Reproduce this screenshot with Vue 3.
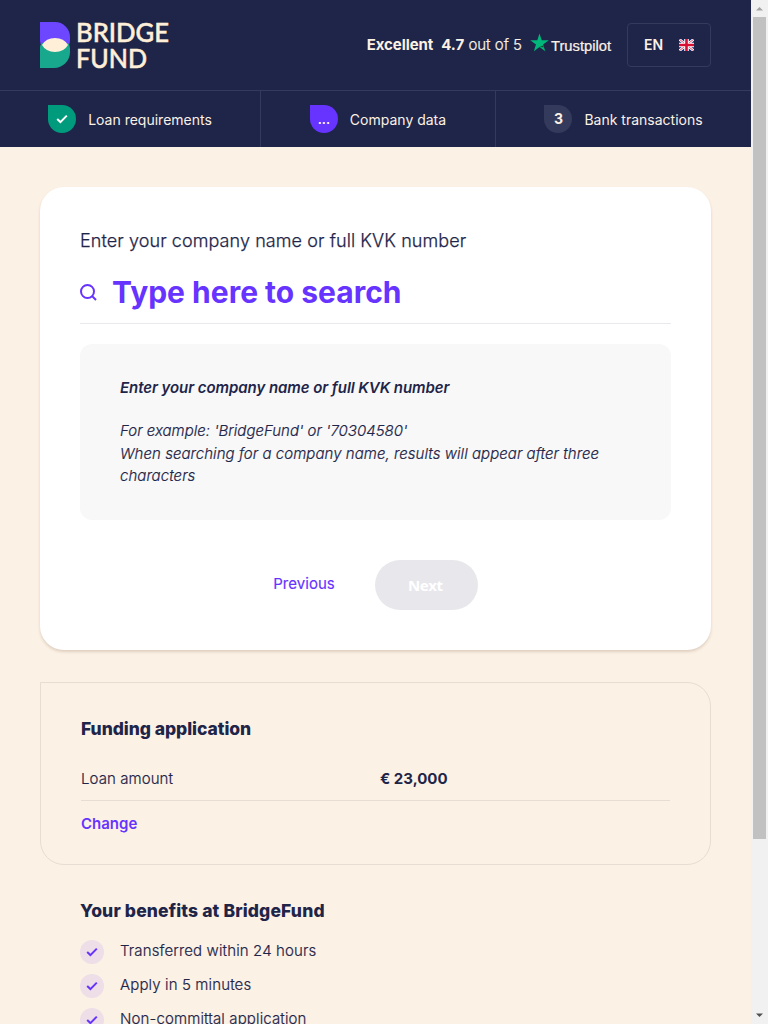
<script setup>
const steps = [
  { label: 'Loan requirements', state: 'done', mark: '' },
  { label: 'Company data', state: 'current', mark: '...' },
  { label: 'Bank transactions', state: 'todo', mark: '3' },
]
const benefits = ['Transferred within 24 hours', 'Apply in 5 minutes', 'Non-committal application']
</script>

<template>
  <div class="window">
    <div class="page">
      <header class="top">
        <svg class="logo" width="130" height="48" viewBox="0 0 130 48">
          <path d="M0 1h15a15 15 0 0 1 15 15v4q0 3-2 5H2q-2-2-2-5z" fill="#6c47ff" />
          <path d="M0 26q0-2 2-4h26q2 2 2 5v4a16 16 0 0 1-16 16H0z" fill="#18a88d" />
          <path d="M2 24Q6 17 15 17t13 7Q24 31 15 31T2 24z" fill="#ffefd8" />
          <text x="36" y="20.500" textLength="93" lengthAdjust="spacingAndGlyphs">BRIDGE</text>
          <text x="36" y="46.500" textLength="71" lengthAdjust="spacingAndGlyphs">FUND</text>
        </svg>
        <div class="rating">
          <b class="excellent">Excellent</b>
          <span class="score"><b>4.7</b> out of 5</span>
          <svg class="trust" width="82" height="24" viewBox="0 0 82 24">
            <path d="M9.500 .5l2.200 6.800h7.100l-5.700 4.200 2.200 6.800-5.800-4.200-5.700 4.200L6 11.500 .2 7.300h7.100z" fill="#00b67a" />
            <path d="M13.200 12.400l.6 1.900-4.300-.2z" fill="#005128" />
            <text x="21" y="17.500" textLength="60" lengthAdjust="spacingAndGlyphs">Trustpilot</text>
          </svg>
        </div>
        <div class="lang">
          <span>EN</span>
          <svg width="15" height="12" viewBox="0 0 15 12">
            <path d="M0 0h15v12H0z" fill="#0a2a78" />
            <path d="M0 0l15 12M15 0L0 12" stroke="#fff" stroke-width="2.6" />
            <path d="M0 0l15 12M15 0L0 12" stroke="#d80f32" stroke-width=".8" />
            <path d="M7.500 0v12M0 6h15" stroke="#fff" stroke-width="4.600" />
            <path d="M7.500 0v12M0 6h15" stroke="#d80f32" stroke-width="2.600" />
          </svg>
        </div>
      </header>
      <nav class="steps">
        <div v-for="s in steps" :key="s.label" class="step" :class="s.state">
          <span class="drop">
            <svg v-if="s.state === 'done'" width="12" height="10" viewBox="0 0 12 10"><path d="M1.200 5.100l3.200 3L10.800 1.600" fill="none" stroke="#fff" stroke-width="2" /></svg>
            <template v-else>{{ s.mark }}</template>
          </span>
          <span class="label">{{ s.label }}</span>
        </div>
      </nav>

      <main>
        <section class="card">
          <p class="lead">Enter your company name or full KVK number</p>
          <div class="search">
            <svg width="18" height="18" viewBox="0 0 18 18"><circle cx="7.500" cy="7.500" r="6.500" /><path d="M12 12l4 4" /></svg>
            <span>Type here to search</span>
          </div>
          <div class="hint">
            <p class="hint-title">Enter your company name or full KVK number</p>
            <p class="hint-text">For example: 'BridgeFund' or '70304580'<br><span class="note">When searching for a company name, results will appear after three characters</span></p>
          </div>
          <div class="actions">
            <a class="previous">Previous</a>
            <button class="next" disabled>Next</button>
          </div>
        </section>

        <section class="funding">
          <h2 class="funding-title">Funding application</h2>
          <div class="row"><span class="amount-label">Loan amount</span><b>€ 23,000</b></div>
          <a class="change">Change</a>
        </section>

        <section class="benefits">
          <h2 class="benefits-title">Your benefits at BridgeFund</h2>
          <ul>
            <li v-for="b in benefits" :key="b">
              <span class="tick"><svg width="12" height="10" viewBox="0 0 12 10"><path d="M1.200 5.100l3.200 3L10.800 1.600" fill="none" stroke="#6633ff" stroke-width="2" /></svg></span>
              <span>{{ b }}</span>
            </li>
          </ul>
        </section>
      </main>
    </div>
    <div class="scrollbar">
      <svg width="17" height="17" viewBox="0 0 17 17"><path d="M5 10.500h7L8.500 7z" fill="#a3a3a3" /></svg>
      <div class="thumb"></div>
      <svg width="17" height="17" viewBox="0 0 17 17"><path d="M5 6.500h7L8.500 10z" fill="#505050" /></svg>
    </div>
  </div>
</template>

<style>
html, body { margin: 0; overflow: hidden; }
</style>

<style scoped>
* { box-sizing: border-box; }
p, h2, ul { margin: 0; padding: 0; }
.window { display: flex; width: 768px; height: 1024px; overflow: hidden; font-family: Inter, "Liberation Sans", sans-serif; font-size: 15px; color: #1e2549; }
.page { width: 751px; height: 1024px; overflow: hidden; background: #fcf1e5; }
.top { height: 90px; background: #1e2549; display: flex; align-items: center; padding: 0 40px; color: #fcf1e5; }
.logo { display: block; margin-top: -1px; overflow: visible; }
.logo text { font: 500 26px Lato, sans-serif; fill: #ffefd8; stroke: #ffefd8; stroke-width: .5px; }
.rating { margin-left: auto; display: flex; align-items: center; line-height: 20px; }
.excellent { font-weight: 700; margin-right: 8px; letter-spacing: -.08px; }
.score { font-weight: 300; -webkit-text-stroke: .2px #fcf1e5; }
.score b { font-weight: 700; -webkit-text-stroke: 0; }
.trust { margin-left: 8px; margin-top: -1px; }
.trust text { font: 400 14px "Liberation Sans", sans-serif; fill: #fcf1e5; stroke: #fcf1e5; stroke-width: .2px; }
.lang { width: 84px; height: 44px; margin-left: 15px; border: 1px solid #343a5b; border-radius: 4px; display: flex; align-items: center; justify-content: space-between; padding: 0 16px; font-size: 14px; font-weight: 600; }
.lang span { margin-top: -1px; }
.steps { height: 57px; display: grid; grid-template-columns: 261px 235px 255px; background: #1e2549; border-top: 1px solid #343a5b; }
.step { display: flex; align-items: center; justify-content: center; gap: 12px; color: #fcf1e5; border-right: 1px solid #343a5b; }
.step:last-child { border-right: 0; }
.drop { width: 28px; height: 28px; border-radius: 0 14px 14px 14px; display: flex; align-items: center; justify-content: center; font-size: 15px; font-weight: 700; line-height: 28px; color: #fff; }
.done .drop { background: #009b7d; }
.current .drop { background: #6633ff; font-size: 13px; font-weight: 600; }
.todo .drop { background: #343a5b; color: #fcf1e5; font-size: 14px; }
.label { font-size: 14px; line-height: 20px; margin-top: 2px; }
main { padding: 40px 40px 0; }
.card { height: 463px; background: #fff; border-radius: 24px; padding: 40px; box-shadow: 0 2px 3px rgba(80, 50, 20, .17); }
.lead { font-size: 18px; line-height: 27px; font-weight: 300; letter-spacing: .08px; -webkit-text-stroke: .25px #1e2549; }
.search { display: flex; align-items: center; gap: 14px; height: 70px; border-bottom: 1px solid #e9e9ed; padding-top: 8px; padding-bottom: 1px; color: #6633ff; font-size: 30px; font-weight: 700; line-height: 40px; }
.search svg { fill: none; stroke: #6633ff; stroke-width: 2; margin-top: 2px; }
.hint { height: 176px; margin-top: 20px; background: #f8f8f8; border-radius: 12px; padding: 33px 40px; font-style: italic; line-height: 22.500px; }
.hint-title { font-weight: 600; letter-spacing: -.07px; }
.hint-text { margin-top: 20.500px; font-weight: 300; -webkit-text-stroke: .2px #1e2549; }
.note { letter-spacing: .05px; }
.actions { display: flex; justify-content: center; gap: 40px; margin-top: 40px; }
.previous { color: #6633ff; line-height: 22px; margin-top: 13px; letter-spacing: .05px; -webkit-text-stroke: .15px #6633ff; }
.next { width: 103px; height: 50px; border: 0; border-radius: 25px; background: #e8e8ec; color: #fff; font: 700 15px "Noto Sans", sans-serif; letter-spacing: -.3px; padding: 0 2px 0 0; }
.funding { height: 183px; margin-top: 32px; border: 1px solid #e8ddd2; border-radius: 0 24px 24px 24px; padding: 32px 40px 0; }
h2 { font-size: 17.500px; line-height: 28px; font-weight: 800; }
.funding-title { letter-spacing: -.05px; }
.benefits-title { letter-spacing: .14px; }
.row { display: flex; height: 58px; border-bottom: 1px solid #e8ddd2; padding-top: 24px; line-height: 23px; font-weight: 300; }
.amount-label { width: 299px; letter-spacing: .08px; -webkit-text-stroke: .2px #1e2549; }
.row b { font-weight: 700; }
.change { display: block; margin-top: 12px; line-height: 22px; font-weight: 600; color: #6633ff; }
.benefits { padding: 32px 40px 0; }
ul { list-style: none; margin-top: 15px; }
li { display: flex; gap: 16px; height: 24px; margin-bottom: 10px; line-height: 22px; font-weight: 300; letter-spacing: .13px; -webkit-text-stroke: .2px #1e2549; }
.tick { width: 24px; height: 24px; border-radius: 12px; background: #eddee8; display: flex; align-items: center; justify-content: center; }
.scrollbar { width: 17px; height: 1024px; background: #f1f1f1; display: flex; flex-direction: column; }
.scrollbar svg { display: block; }
.thumb { width: 13px; height: 822px; margin: 0 2px auto; background: #c1c1c1; }
</style>
